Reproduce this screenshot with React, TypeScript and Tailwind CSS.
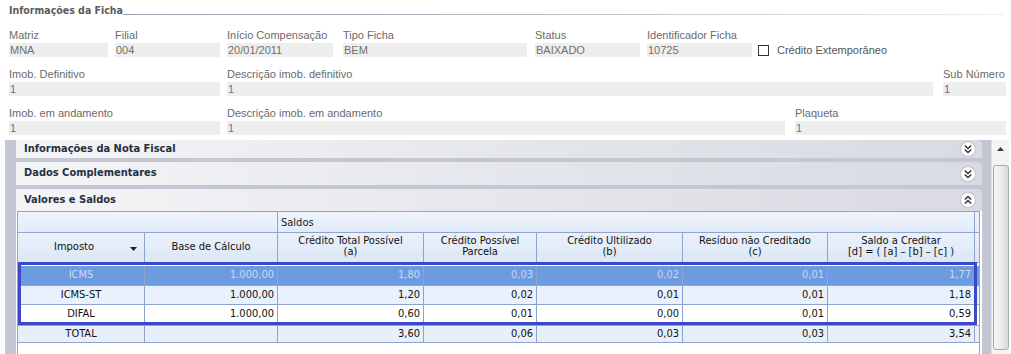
import React from 'react';

// form field: label above a grey read-only box
const Field: React.FC<{ label: string; value: string; className: string; purple?: boolean }> = ({ label, value, className, purple }) => (
  <div className={`flex flex-col ${className}`}>
    <div className="h-[14px] leading-[14px] text-[11px] text-[#6a6a6a] whitespace-nowrap">{label}</div>
    <div className={`mt-[1px] h-[14px] leading-[14px] bg-[#eeeeee] pl-[1px] text-[11px] ${purple ? 'text-[#85609a]' : 'text-[#707070]'}`}>
      {value}
    </div>
  </div>
);

const Chevrons: React.FC<{ up?: boolean }> = ({ up }) => (
  <div className="w-[14px] h-[14px] rounded-full bg-white shadow-[0_0_2px_rgba(0,0,0,0.35)] flex items-center justify-center">
    <svg width="10" height="10" viewBox="0 0 10 10" className={up ? 'rotate-180' : ''}>
      <polyline points="1.8,1.5 5,4.5 8.2,1.5" fill="none" stroke="#333" strokeWidth="1.5" />
      <polyline points="1.8,5.5 5,8.5 8.2,5.5" fill="none" stroke="#333" strokeWidth="1.5" />
    </svg>
  </div>
);

const PanelHeader: React.FC<{ title: string; h: string; up?: boolean }> = ({ title, h, up }) => (
  <div className={`${h} flex items-center justify-between pl-[8px] pr-[7px] rounded-tr-[5px] bg-gradient-to-r from-[#f5f5f7] via-[#e6e7ec] to-[#d9dae2]`}>
    <span className="font-['DejaVu_Sans_Condensed','Liberation_Sans',sans-serif] font-bold text-[11px] text-[#26303e]">{title}</span>
    <Chevrons up={up} />
  </div>
);

const cols = ['w-[127px]', 'w-[133px]', 'w-[146px]', 'w-[113px]', 'w-[146px]', 'w-[145px]', 'w-[147px]'];

const rows = [
  { imposto: 'ICMS', vals: ['1.000,00', '1,80', '0,03', '0,02', '0,01', '1,77'], bg: 'bg-[#6c9be0]', text: 'text-[#cbd9f1]', h: 'h-[23px] pt-[3px]' },
  { imposto: 'ICMS-ST', vals: ['1.000,00', '1,20', '0,02', '0,01', '0,01', '1,18'], bg: 'bg-[#e9f1fc]', text: 'text-[#111]', h: 'h-[19px]' },
  { imposto: 'DIFAL', vals: ['1.000,00', '0,60', '0,01', '0,00', '0,01', '0,59'], bg: 'bg-white', text: 'text-[#111]', h: 'h-[21px] pb-[2px]' },
  { imposto: 'TOTAL', vals: ['', '3,60', '0,06', '0,03', '0,03', '3,54'], bg: 'bg-[#e7eff9]', text: 'text-[#111]', h: 'h-[17px]' },
];

const headers: [string, string][] = [
  ['Crédito Total Possível', '(a)'],
  ['Crédito Possível', 'Parcela'],
  ['Crédito Ultilizado', '(b)'],
  ['Resíduo não Creditado', '(c)'],
  ['Saldo a Creditar', '[d] = ( [a] – [b] – [c] )'],
];

const App: React.FC = () => {
  return (
    <div className="w-[1011px] h-[354px] overflow-hidden bg-white font-['Liberation_Sans',sans-serif]">
      {/* title */}
      <div className="flex h-[18px] pl-[9px] pr-[6px]">
        <span className="pt-[4px] leading-[13px] font-['DejaVu_Sans_Condensed','Liberation_Sans',sans-serif] font-bold text-[10.5px] text-[#5b5b5b] whitespace-nowrap">
          Informações da Ficha
        </span>
        <div className="flex-1 mt-[14px] h-px bg-gradient-to-r from-[#98a1b1] via-[#b9bfca] to-[#eef0f3]" />
      </div>

      {/* form */}
      <div className="pl-[9px] pt-[10px] flex flex-col gap-[10px]">
        <div className="flex">
          <Field label="Matriz" value="MNA" className="w-[99px]" />
          <Field label="Filial" value="004" className="ml-[7px] w-[105px]" />
          <Field label="Início Compensação" value="20/01/2011" className="ml-[7px] w-[106px]" />
          <Field label="Tipo Ficha" value="BEM" className="ml-[10px] w-[184px]" />
          <Field label="Status" value="BAIXADO" className="ml-[8px] w-[105px]" />
          <Field label="Identificador Ficha" value="10725" className="ml-[7px] w-[105px]" />
          <div className="ml-[6px] mt-[15px] h-[14px] flex items-center gap-[8px]">
            <div className="w-[11px] h-[11px] border border-[#333] bg-white" />
            <span className="text-[11px] text-[#555]">Crédito Extemporâneo</span>
          </div>
        </div>
        <div className="flex">
          <Field label="Imob. Definitivo" value="1" purple className="w-[211px]" />
          <Field label="Descrição imob. definitivo" value="1" purple className="ml-[7px] w-[706px]" />
          <Field label="Sub Número" value="1" purple className="ml-[10px] w-[63px]" />
        </div>
        <div className="flex">
          <Field label="Imob. em andamento" value="1" purple className="w-[211px]" />
          <Field label="Descrição imob. em andamento" value="1" purple className="ml-[7px] w-[558px]" />
          <Field label="Plaqueta" value="1" purple className="ml-[10px] w-[211px]" />
        </div>
      </div>

      {/* collapsible panels */}
      <div className="mt-[5px] h-[214px] flex">
        <div className="ml-[5px] w-[986px] bg-[#c3c7d3] pl-[11px] pr-[9px] flex flex-col gap-[4px]">
          <PanelHeader title="Informações da Nota Fiscal" h="h-[18px]" />
          <PanelHeader title="Dados Complementares" h="h-[23px]" />
          <div className="flex flex-col flex-1">
            <PanelHeader title="Valores e Saldos" h="h-[22px]" up />
            <div className="flex-1 bg-white pl-[1px]">
              <div className="relative w-[963px] h-full border-l border-t border-r border-[#8ea3cf] font-['DejaVu_Sans_Condensed','Liberation_Sans',sans-serif] text-[11px] text-[#111]">
                {/* group row */}
                <div className="flex h-[21px] border-b border-[#8ea3cf] bg-gradient-to-b from-[#eef4fc] to-[#e2ebf7]">
                  <div className="w-[260px] border-r border-[#8ea3cf]" />
                  <div className="w-[697px] border-r border-[#8ea3cf] pl-[3px] pt-[4px] leading-[13px] text-[#222]">Saldos</div>
                </div>
                {/* header row */}
                <div className="flex h-[30px] border-b border-[#8ea3cf] bg-gradient-to-b from-[#eaf1fb] to-[#dce7f5]">
                  <div className={`${cols[0]} border-r border-[#8ea3cf] flex items-center justify-center relative pr-[14px]`}>
                    Imposto
                    <svg width="7" height="4" viewBox="0 0 7 4" className="absolute right-[7px] top-[14px]">
                      <polygon points="0,0 7,0 3.5,4" fill="#222" />
                    </svg>
                  </div>
                  <div className={`${cols[1]} border-r border-[#8ea3cf] flex items-center justify-center`}>Base de Cálculo</div>
                  {headers.map((hd, i) => (
                    <div key={hd[0]} className={`${cols[i + 2]} border-r border-[#8ea3cf] flex flex-col items-center justify-center leading-[11.5px] pb-[3px]`}>
                      <span>{hd[0]}</span>
                      <span>{hd[1]}</span>
                    </div>
                  ))}
                </div>
                {/* data rows */}
                {rows.map(r => (
                  <div key={r.imposto} className={`flex border-b border-[#8ea3cf] ${r.h} ${r.text}`}>
                    <div className={`${cols[0]} ${r.bg} border-r border-[#8ea3cf] flex items-center justify-center`}>{r.imposto}</div>
                    {r.vals.map((v, i) => (
                      <div key={i} className={`${cols[i + 1]} ${r.bg} border-r border-[#8ea3cf] flex items-center justify-end pr-[3px]`}>{v}</div>
                    ))}
                    <div className={`flex-1 ${r.bg}`} />
                  </div>
                ))}
                {/* selection frame */}
                <div className="absolute left-0 top-[50px] w-[959px] h-[63px] border-[3px] border-[#3d47c9] pointer-events-none" />
              </div>
            </div>
          </div>
        </div>
        {/* scrollbar */}
        <div className="w-[18px] h-full bg-[#f4f4f4] border-l border-[#e2e2e2] flex flex-col items-center">
          <svg width="7" height="4" viewBox="0 0 7 4" className="mt-[7px]">
            <polygon points="3.5,0 7,4 0,4" fill="#3a3a3a" />
          </svg>
          <div className="mt-[14px] w-[16px] flex-1 mb-[4px] rounded-[3px] border border-[#a9a9a9] bg-gradient-to-r from-[#f7f7f7] via-[#ececec] to-[#d8d8d8]" />
        </div>
      </div>
    </div>
  );
};

export default App;
